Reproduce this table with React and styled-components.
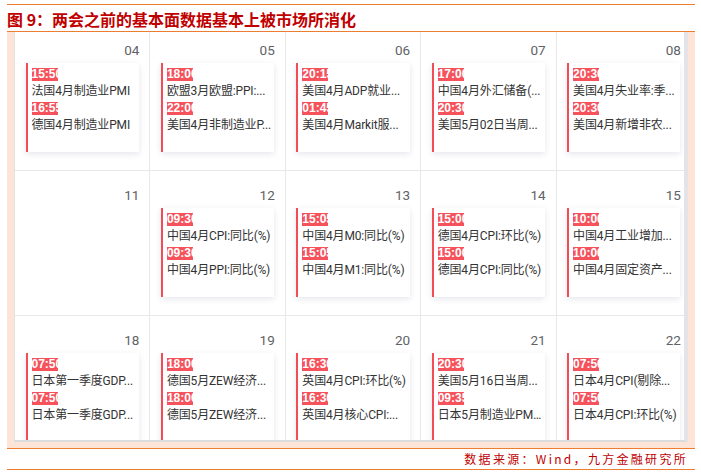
import React from 'react'
import styled, { createGlobalStyle } from 'styled-components'

const GlobalStyle = createGlobalStyle`
    html, body {
        margin: 0;
        padding: 0;
        background: #ffffff;
    }
    body {
        font-family: "Microsoft YaHei", "Noto Sans CJK SC", "Noto Sans", sans-serif;
    }
`

const weeks = [
    [
        { day: '04', events: [['15:50', '法国4月制造业PMI'], ['16:55', '德国4月制造业PMI']] },
        { day: '05', events: [['18:00', '欧盟3月欧盟:PPI:...'], ['22:00', '美国4月非制造业P...']] },
        { day: '06', events: [['20:15', '美国4月ADP就业...'], ['01:45', '美国4月Markit服...']] },
        { day: '07', events: [['17:00', '中国4月外汇储备(...'], ['20:30', '美国5月02日当周...']] },
        { day: '08', events: [['20:30', '美国4月失业率:季...'], ['20:30', '美国4月新增非农...']] },
    ],
    [
        { day: '11', events: [] },
        { day: '12', events: [['09:30', '中国4月CPI:同比(%)'], ['09:30', '中国4月PPI:同比(%)']] },
        { day: '13', events: [['15:05', '中国4月M0:同比(%)'], ['15:05', '中国4月M1:同比(%)']] },
        { day: '14', events: [['15:00', '德国4月CPI:环比(%)'], ['15:00', '德国4月CPI:同比(%)']] },
        { day: '15', events: [['10:00', '中国4月工业增加...'], ['10:00', '中国4月固定资产...']] },
    ],
    [
        { day: '18', events: [['07:50', '日本第一季度GDP...'], ['07:50', '日本第一季度GDP...']] },
        { day: '19', events: [['18:00', '德国5月ZEW经济...'], ['18:00', '德国5月ZEW经济...']] },
        { day: '20', events: [['16:30', '英国4月CPI:环比(%)'], ['16:30', '英国4月核心CPI:...']] },
        { day: '21', events: [['20:30', '美国5月16日当周...'], ['09:35', '日本5月制造业PM...']] },
        { day: '22', events: [['07:50', '日本4月CPI(剔除...'], ['07:50', '日本4月CPI:环比(%)']] },
    ],
]

const Page = styled.div`
    width: 688px;
    padding: 4px 0 0 7px;
`

const Title = styled.div`
    border-top: 1px solid #ed7d31;
    border-bottom: 1px solid #ed7d31;
    height: 23px;
    padding-top: 3px;
    line-height: 23px;
    font-size: 16px;
    font-weight: bold;
    color: #c00000;
    white-space: nowrap;
`

const Figure = styled.div`
    background: #fce4d6;
    padding: 0 7px 6px 7px;
`

const Panel = styled.div`
    width: 669px;
    height: 408px;
    overflow: hidden;
    background: #ffffff;
    border-left: 1px solid #e2e2e2;
    border-right: 4px solid #e4e4e8;
    border-bottom: 2px solid #dcdcdc;
`

const Grid = styled.div`
    display: grid;
    grid-template-columns: repeat(5, 135.4px);
    margin-top: -6px;
`

const Cell = styled.div`
    height: 144px;
    border-right: 1px solid #e8e8ea;
    border-bottom: 1px solid #e8e8ea;
    display: flex;
    flex-direction: column;
`

const DayNumber = styled.div`
    padding: 16px 10px 0 0;
    height: 16px;
    line-height: 16px;
    margin-bottom: 5px;
    text-align: right;
    font-family: Roboto, "Noto Sans", sans-serif;
    font-size: 13.5px;
    color: #606266;
`

const Card = styled.div`
    margin: 0 10.5px;
    height: 68px;
    padding: 5px 3px 16px 4px;
    background: #ffffff;
    border-left: 2px solid #f24d57;
    box-shadow: 0 2px 6px rgba(40, 50, 110, 0.12);
    overflow: hidden;
`

const Time = styled.div`
    width: 26px;
    height: 13px;
    line-height: 13px;
    overflow: hidden;
    white-space: nowrap;
    background: #f5525c;
    color: #ffffff;
    font-family: "Liberation Sans", Arial, sans-serif;
    font-size: 12px;
    font-weight: bold;
`

const EventText = styled.div`
    height: 21px;
    line-height: 21px;
    font-family: Roboto, "Noto Sans CJK SC", sans-serif;
    font-size: 12px;
    letter-spacing: -0.15px;
    color: #333333;
    white-space: nowrap;
    overflow: hidden;
    text-overflow: ellipsis;
`

const Source = styled.div`
    border-top: 1px solid #ed7d31;
    border-bottom: 1px solid #ed7d31;
    height: 20px;
    line-height: 20px;
    padding-right: 7px;
    text-align: right;
    font-size: 12px;
    letter-spacing: 2.3px;
    color: #c00000;
`

const Day = ({ day, events }) => (
    <Cell>
        <DayNumber>{day}</DayNumber>
        {events.length > 0 && (
            <Card>
                {events.map(([time, text], i) => (
                    <React.Fragment key={i}>
                        <Time>{time}</Time>
                        <EventText>{text}</EventText>
                    </React.Fragment>
                ))}
            </Card>
        )}
    </Cell>
)

const App = () => {
    return (
        <Page>
            <GlobalStyle />
            <Title>图 9：两会之前的基本面数据基本上被市场所消化</Title>
            <Figure>
                <Panel>
                    <Grid>
                        {weeks.flat().map(item => (
                            <Day key={item.day} day={item.day} events={item.events} />
                        ))}
                    </Grid>
                </Panel>
            </Figure>
            <Source>数据来源：Wind，九方金融研究所</Source>
        </Page>
    )
}

export default App
